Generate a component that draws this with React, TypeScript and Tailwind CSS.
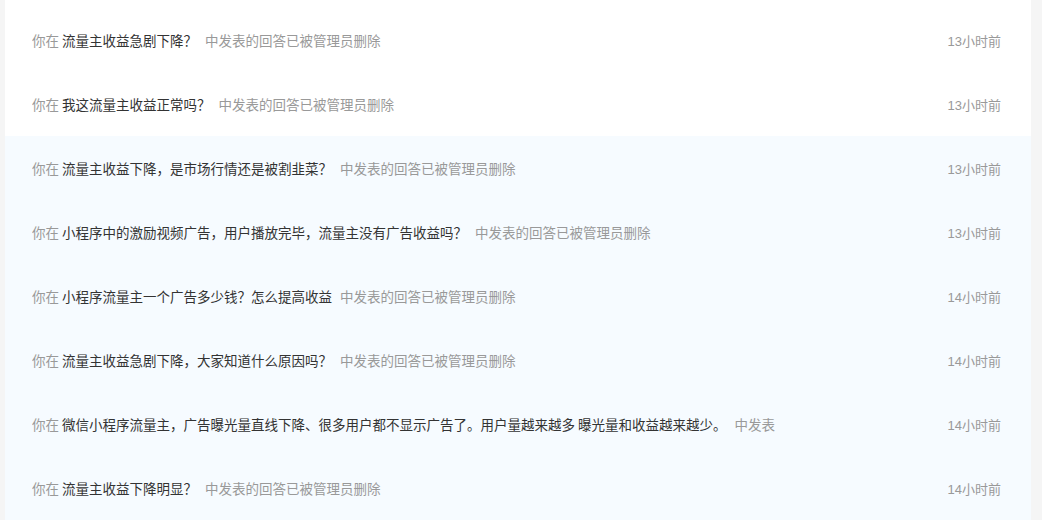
import React from 'react';

const rows = [
  { title: '流量主收益急剧下降？', time: '13小时前', read: true },
  { title: '我这流量主收益正常吗？', time: '13小时前', read: true },
  { title: '流量主收益下降，是市场行情还是被割韭菜？', time: '13小时前', read: false },
  { title: '小程序中的激励视频广告，用户播放完毕，流量主没有广告收益吗？', time: '13小时前', read: false },
  { title: '小程序流量主一个广告多少钱？怎么提高收益', time: '14小时前', read: false },
  { title: '流量主收益急剧下降，大家知道什么原因吗？', time: '14小时前', read: false },
  {
    title: '微信小程序流量主，广告曝光量直线下降、很多用户都不显示广告了。用户量越来越多 曝光量和收益越来越少。',
    time: '14小时前',
    read: false,
  },
  { title: '流量主收益下降明显？', time: '14小时前', read: false },
];

export default function App() {
  return (
    <div
      className="w-[1042px] h-[520px] overflow-hidden bg-[#f5f5f5] text-[13.5px]"
      style={{ fontFamily: '"Noto Sans CJK SC", "Noto Sans", sans-serif' }}
    >
      <div className="ml-[5px] w-[1026px] bg-white pt-[8px]">
        {rows.map((row, i) => (
          <div
            key={i}
            className={`flex h-[64px] items-center justify-between pl-[27px] pr-[30px] ${
              row.read ? 'bg-white' : 'bg-[#f6fbff]'
            }`}
          >
            {/* long titles wrap and the overflow is hidden, like the original list */}
            <div className="h-[20px] w-[750px] overflow-hidden leading-[20px]">
              <span className="text-[#999]">你在 </span>
              <span className="text-[#333]">{row.title}</span>
              <span className="ml-2 text-[#999]">中发表的回答已被管理员删除</span>
            </div>
            <span
              className="mt-[4px] text-[13px] leading-[20px] text-[#999]"
              style={{ fontFamily: '"Liberation Sans", "Noto Sans CJK SC", sans-serif' }}
            >
              {row.time}
            </span>
          </div>
        ))}
      </div>
    </div>
  );
}
